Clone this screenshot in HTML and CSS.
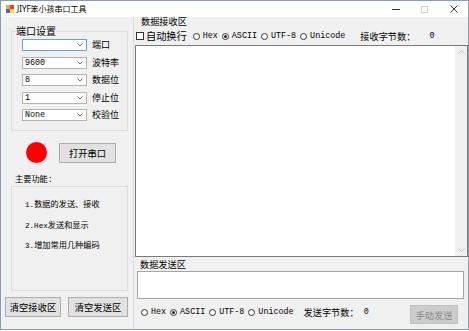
FILE: index.html
```html
<!DOCTYPE html>
<html lang="zh-CN">
<head>
<meta charset="utf-8">
<title>JIYF笨小孩串口工具</title>
<link rel="stylesheet" href="styles.css">
</head>
<body>
<div class="window">
  <div class="titlebar">
    <svg class="app-icon" viewBox="0 0 8 8" width="8" height="8">
      <rect x="0" y="0" width="8" height="8" fill="#f2a93b"/>
      <rect x="4" y="0" width="4" height="4" fill="#e0452f"/>
      <rect x="0" y="4" width="4" height="4" fill="#3d6fc2"/>
      <rect x="4" y="4" width="4" height="4" fill="#f6d65a"/>
    </svg>
    <span class="title"><span class="t-en">JIYF</span>笨小孩串口工具</span>
    <div class="caption">
      <span class="cap"><span class="g-min"></span></span>
      <span class="cap"><span class="g-max"></span></span>
      <span class="cap">
        <svg class="g-close" viewBox="0 0 8 8" width="8" height="8"><path d="M0.5 0.5L7.5 7.5M7.5 0.5L0.5 7.5" stroke="#222" stroke-width="0.9" fill="none"/></svg>
      </span>
    </div>
  </div>
  <div class="client">
    <aside class="left">
      <fieldset class="group port">
        <legend>端口设置</legend>
        <div class="rows">
          <div class="row"><div class="combo focus"><span class="val"></span><svg class="chev" viewBox="0 0 6 4" width="6" height="4"><path d="M0.5 0.5L3 3L5.5 0.5" stroke="#666" stroke-width="0.9" fill="none"/></svg></div><span class="lbl">端口</span></div>
          <div class="row"><div class="combo"><span class="val">9600</span><svg class="chev" viewBox="0 0 6 4" width="6" height="4"><path d="M0.5 0.5L3 3L5.5 0.5" stroke="#666" stroke-width="0.9" fill="none"/></svg></div><span class="lbl">波特率</span></div>
          <div class="row"><div class="combo"><span class="val">8</span><svg class="chev" viewBox="0 0 6 4" width="6" height="4"><path d="M0.5 0.5L3 3L5.5 0.5" stroke="#666" stroke-width="0.9" fill="none"/></svg></div><span class="lbl">数据位</span></div>
          <div class="row"><div class="combo"><span class="val">1</span><svg class="chev" viewBox="0 0 6 4" width="6" height="4"><path d="M0.5 0.5L3 3L5.5 0.5" stroke="#666" stroke-width="0.9" fill="none"/></svg></div><span class="lbl">停止位</span></div>
          <div class="row"><div class="combo"><span class="val">None</span><svg class="chev" viewBox="0 0 6 4" width="6" height="4"><path d="M0.5 0.5L3 3L5.5 0.5" stroke="#666" stroke-width="0.9" fill="none"/></svg></div><span class="lbl">校验位</span></div>
        </div>
      </fieldset>
      <div class="open-row">
        <span class="led"></span>
        <button class="btn open">打开串口</button>
      </div>
      <div class="feat-title">主要功能<span class="colon">:</span></div>
      <div class="group feats">
        <p><span class="en">1.</span>数据的发送、接收</p>
        <p><span class="en">2.Hex</span>发送和显示</p>
        <p><span class="en">3.</span>增加常用几种编码</p>
      </div>
      <div class="clear-row">
        <button class="btn clr1">清空接收区</button>
        <button class="btn clr2">清空发送区</button>
      </div>
    </aside>
    <main class="right">
      <section class="recv">
        <div class="sec-title recv-title">数据接收区</div>
        <div class="opts recv-opts">
          <label class="chk-item"><span class="chk"></span><span class="chk-text">自动换行</span></label>
          <label class="opt"><span class="radio"></span><span class="en">Hex</span></label>
          <label class="opt"><span class="radio on"></span><span class="en">ASCII</span></label>
          <label class="opt"><span class="radio"></span><span class="en">UTF-8</span></label>
          <label class="opt"><span class="radio"></span><span class="en">Unicode</span></label>
          <span class="count-lbl recv-lbl">接收字节数：</span>
          <span class="en count recv-count">0</span>
        </div>
        <div class="recv-box">
          <div class="scrollbar">
            <span class="arrow"><svg viewBox="0 0 7 4" width="7" height="4"><path d="M0.5 3.5L3.5 0.5L6.5 3.5" stroke="#c2c2c2" stroke-width="1" fill="none"/></svg></span>
            <span class="arrow"><svg viewBox="0 0 7 4" width="7" height="4"><path d="M0.5 0.5L3.5 3.5L6.5 0.5" stroke="#c2c2c2" stroke-width="1" fill="none"/></svg></span>
          </div>
        </div>
      </section>
      <section class="send">
        <div class="sec-title send-title">数据发送区</div>
        <div class="send-box"></div>
        <div class="opts send-opts">
          <label class="opt"><span class="radio"></span><span class="en">Hex</span></label>
          <label class="opt"><span class="radio on"></span><span class="en">ASCII</span></label>
          <label class="opt"><span class="radio"></span><span class="en">UTF-8</span></label>
          <label class="opt"><span class="radio"></span><span class="en">Unicode</span></label>
          <span class="count-lbl send-lbl">发送字节数：</span>
          <span class="en count send-count">0</span>
          <button class="btn send-btn" disabled>手动发送</button>
        </div>
      </section>
    </main>
  </div>
</div>
</body>
</html>
```
FILE: styles.css
```css
* { box-sizing: border-box; margin: 0; padding: 0; }
html, body { width: 469px; height: 331px; overflow: hidden; }
body {
  background: #ffffff;
  font-family: "Noto Sans CJK SC", "Noto Sans", sans-serif;
  color: #000;
}
.window {
  width: 469px;
  height: 330px;
  border: 1px solid #8a9bb3;
  display: flex;
  flex-direction: column;
  background: #f0f0f0;
}
.titlebar {
  height: 16px;
  background: #ffffff;
  display: flex;
  align-items: center;
  flex: none;
}
.app-icon { margin-left: 5px; margin-right: 3px; flex: none; }
.title { font-size: 8px; line-height: 10px; white-space: nowrap; }
.t-en { font-family: "Noto Sans", sans-serif; font-size: 8px; }
.caption { margin-left: auto; display: flex; height: 100%; }
.cap {
  width: 29px;
  height: 16px;
  display: flex;
  align-items: center;
  justify-content: center;
}
.g-min { width: 8px; height: 1px; background: #333; }
.g-max { width: 7px; height: 7px; border: 1px solid #cfcfcf; }
.g-close { display: block; }

.client { flex: 1; display: flex; min-height: 0; }

/* left column */
.left {
  width: 132px;
  flex: none;
  padding-top: 9px;
  display: flex;
  flex-direction: column;
}
.group { border: 1px solid #dcdcdc; }
fieldset.port {
  margin-left: 10px;
  width: 117px;
  padding: 0;
  min-width: 0;
}
fieldset.port legend {
  margin-left: 4px;
  padding: 0;
  font-size: 10px;
  line-height: 10px;
}
.rows {
  display: flex;
  flex-direction: column;
  gap: 5.5px;
  padding: 3px 0 9px 10px;
}
.row { display: flex; align-items: center; height: 12px; }
.combo {
  width: 65px;
  height: 12px;
  background: #fff;
  border: 1px solid #b3b3b3;
  display: flex;
  align-items: center;
  padding-left: 2px;
  padding-right: 3px;
}
.combo.focus { border-color: #64a3e8; }
.val {
  font-family: "Liberation Mono", monospace;
  font-size: 8.4px;
  line-height: 10px;
  flex: 1;
}
.chev { display: block; flex: none; }
.lbl { margin-left: 5px; font-size: 9px; line-height: 10px; white-space: nowrap; }

.open-row {
  margin-top: 11px;
  display: flex;
  align-items: center;
  height: 21px;
}
.led {
  margin-left: 25px;
  width: 21px;
  height: 21px;
  border-radius: 50%;
  background: #ff0000;
  flex: none;
}
.btn {
  font-family: "Noto Sans CJK SC", sans-serif;
  font-size: 9.3px;
  line-height: 10px;
  background: #e1e1e1;
  border: 1px solid #adadad;
  color: #000;
  display: flex;
  align-items: center;
  justify-content: center;
}
.btn.open { margin-left: 12px; width: 57px; height: 20px; }

.feat-title {
  margin-top: 10px;
  margin-left: 14px;
  font-size: 8.2px;
  line-height: 10px;
}
.colon { font-family: "Liberation Mono", monospace; }
.feats {
  margin-top: 1px;
  margin-left: 10px;
  width: 117px;
  height: 105px;
  padding: 11px 0 0 13px;
  display: flex;
  flex-direction: column;
  gap: 8.5px;
}
.feats p { font-size: 8.2px; line-height: 10px; white-space: nowrap; }
.feats .en { font-size: 7.6px; }

.clear-row {
  margin-top: 6px;
  margin-left: 4px;
  display: flex;
  gap: 7px;
}
.clr1 { width: 56px; height: 20px; }
.clr2 { width: 60px; height: 20px; }

/* right column */
.right {
  flex: 1;
  border-left: 1px solid #dadada;
  padding-left: 1px;
  display: flex;
  flex-direction: column;
  min-width: 0;
}
.sec-title {
  padding-left: 6px;
  font-size: 9.2px;
  line-height: 10px;
}
.recv-title { height: 11px; line-height: 9px; }
.en { font-family: "Liberation Mono", monospace; font-size: 8.4px; }
.opts { display: flex; align-items: center; white-space: nowrap; }
.recv-opts { margin-top: 2px; height: 12px; padding-left: 1px; }
.chk-item { display: flex; align-items: center; gap: 2px; margin-right: 6px; }
.chk { width: 8px; height: 8px; border: 1px solid #333; background: #fff; }
.chk-text { font-size: 10.2px; line-height: 12px; }
.opt { display: flex; align-items: center; gap: 3px; margin-right: 4px; }
.radio {
  width: 7px;
  height: 7px;
  border: 1px solid #333;
  border-radius: 50%;
  background: #fff;
  display: flex;
  align-items: center;
  justify-content: center;
  flex: none;
}
.radio.on::after {
  content: "";
  width: 3px;
  height: 3px;
  border-radius: 50%;
  background: #222;
}
.count-lbl { font-size: 9.2px; line-height: 10px; }
.recv-lbl { margin-left: 11px; }
.recv-count { margin-left: 14px; }

.recv-box {
  margin-top: 3px;
  height: 212px;
  background: #fff;
  border: 1px solid #7a7a7a;
  display: flex;
  justify-content: flex-end;
}
.scrollbar {
  width: 12px;
  background: #f0f0f0;
  display: flex;
  flex-direction: column;
  justify-content: space-between;
}
.arrow {
  height: 12px;
  display: flex;
  align-items: center;
  justify-content: center;
}
.arrow svg { display: block; }

.send-title { margin-top: 2px; padding-left: 5px; }
.send-box {
  margin-top: 2px;
  margin-left: 2px;
  width: 327px;
  height: 28px;
  background: #fff;
  border: 1px solid #a5a5a5;
}
.send-opts {
  margin-top: 6px;
  padding-left: 6px;
  align-items: flex-start;
}
.send-opts .opt, .send-opts .count-lbl, .send-opts .count { margin-top: 2px; height: 10px; line-height: 10px; }
.send-lbl { margin-left: 6px; }
.send-count { margin-left: 5px; }
.send-btn {
  margin-left: auto;
  margin-right: 10px;
  width: 48px;
  height: 19px;
  background: #cccccc;
  border-color: #bfbfbf;
  color: #8a8a8a;
}
```
